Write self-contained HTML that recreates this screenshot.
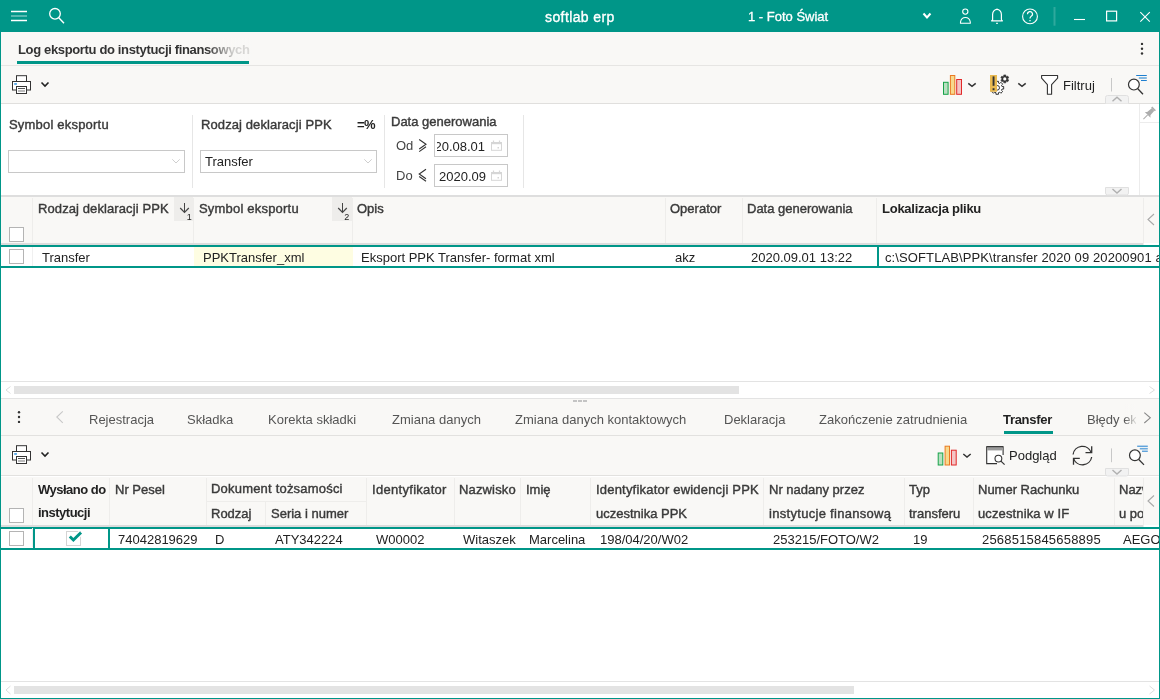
<!DOCTYPE html>
<html><head><meta charset="utf-8">
<style>
*{box-sizing:border-box}
html,body{margin:0;padding:0}
body{width:1160px;height:699px;overflow:hidden;position:relative;background:#fff;font-family:"Liberation Sans",sans-serif;font-size:13px;color:#333}
.a{position:absolute}
.t{position:absolute;white-space:nowrap;line-height:15px;font-size:13px;will-change:transform}
.b{font-weight:bold}
.m{-webkit-text-stroke:0.4px currentColor}
.hl{position:absolute;height:1px;background:#e2e2e2}
.vl{position:absolute;width:1px;background:#e6e6e6}
svg{position:absolute;left:0;top:0;overflow:visible}
</style></head><body>
<!-- top bar -->
<div class="a" style="left:0;top:0;width:1160px;height:32px;background:#009688"></div>
<div class="t" style="left:545px;top:10px;color:#fff;font-size:14px;letter-spacing:0.4px;-webkit-text-stroke:0.35px #fff">softlab erp</div>
<div class="t" style="left:748px;top:9px;color:#fff;-webkit-text-stroke:0.3px #fff">1 - Foto Świat</div>

<!-- window border -->
<div class="a" style="left:0;top:32px;width:1px;height:667px;background:#009688;z-index:5"></div>
<div class="a" style="left:1159px;top:32px;width:1px;height:667px;background:#009688;z-index:5"></div>
<div class="a" style="left:0;top:698px;width:1160px;height:1px;background:#009688;z-index:5"></div>

<!-- page tab strip -->
<div class="a" style="left:1px;top:32px;width:1158px;height:71px;background:#f9f8f6"></div>
<div class="t b" style="left:18px;top:42px;color:#333;letter-spacing:-0.35px;width:233px;overflow:hidden">Log eksportu do instytucji finansowych</div>
<div class="a" style="left:206px;top:38px;width:46px;height:22px;background:linear-gradient(to right,rgba(249,248,246,0),rgba(249,248,246,.8) 60%,rgba(249,248,246,.85))"></div>
<div class="a" style="left:17px;top:61px;width:232px;height:3px;background:#009688"></div>
<div class="hl" style="left:1px;top:65px;width:1158px;background:#e6e5e3"></div>
<div class="hl" style="left:1px;top:103px;width:1158px;background:#e0dfdd"></div>

<div class="t" style="left:1063px;top:78px;color:#222">Filtruj</div>

<!-- filter panel -->
<div class="t m" style="left:9px;top:117px;color:#3a3a3a;letter-spacing:0.2px">Symbol eksportu</div>
<div class="a" style="left:8px;top:150px;width:177px;height:23px;border:1px solid #c8c8c8;background:#fff"></div>
<div class="vl" style="left:192px;top:115px;height:73px"></div>
<div class="t m" style="left:201px;top:117px;color:#3a3a3a;letter-spacing:0.1px">Rodzaj deklaracji PPK</div>
<div class="t b" style="left:357px;top:117px;letter-spacing:-0.5px;color:#222">=%</div>
<div class="a" style="left:200px;top:150px;width:177px;height:23px;border:1px solid #c8c8c8;background:#fff"></div>
<div class="t" style="left:205px;top:154px;color:#222">Transfer</div>
<div class="vl" style="left:384px;top:115px;height:73px"></div>
<div class="t m" style="left:391px;top:114px;color:#3a3a3a">Data generowania</div>
<div class="t" style="left:396px;top:138px;color:#444">Od</div>
<div class="t" style="left:396px;top:168px;color:#444">Do</div>
<div class="a" style="left:434px;top:134px;width:74px;height:23px;border:1px solid #c8c8c8;background:#fff;overflow:hidden"><div class="a" style="left:2px;top:0;width:52px;height:21px;overflow:hidden"><div class="t" style="left:-17px;top:4px;color:#222">2020.08.01</div></div></div>
<div class="a" style="left:434px;top:164px;width:74px;height:23px;border:1px solid #c8c8c8;background:#fff;overflow:hidden"><div class="t" style="left:4px;top:4px;color:#222">2020.09</div></div>
<div class="vl" style="left:523px;top:115px;height:73px"></div>
<div class="vl" style="left:1139px;top:104px;height:91px;background:#ececec"></div>
<div class="hl" style="left:1139px;top:122px;width:20px;background:#ececec"></div>

<div class="a" style="left:1px;top:195px;width:1158px;height:2px;background:#dedede"></div>

<!-- grid 1 header -->
<div class="a" style="left:1px;top:197px;width:1158px;height:46px;background:#f9f8f6"></div>
<div class="a" style="left:1px;top:243px;width:1142px;height:2px;background:#dcdcdc"></div>


<!-- grid 1 columns -->
<div class="vl" style="left:32px;top:198px;height:45px;background:#eeedeb"></div>
<div class="vl" style="left:193px;top:198px;height:45px;background:#eeedeb"></div>
<div class="vl" style="left:352px;top:198px;height:45px;background:#eeedeb"></div>
<div class="vl" style="left:665px;top:198px;height:45px;background:#eeedeb"></div>
<div class="vl" style="left:742px;top:198px;height:45px;background:#eeedeb"></div>
<div class="vl" style="left:876px;top:198px;height:45px;background:#eeedeb"></div>
<div class="vl" style="left:1143px;top:198px;height:47px;background:#eeedeb"></div>
<div class="a" style="left:174px;top:197px;width:19px;height:24px;background:#eeedeb"></div>
<div class="a" style="left:332px;top:197px;width:20px;height:24px;background:#eeedeb"></div>
<div class="a" style="left:9px;top:227px;width:15px;height:15px;border:1px solid #b4b4b4;background:#fff"></div>
<div class="t m" style="left:38px;top:201px;color:#3a3a3a;letter-spacing:0.1px">Rodzaj deklaracji PPK</div>
<div class="t m" style="left:199px;top:201px;color:#3a3a3a;letter-spacing:0.2px">Symbol eksportu</div>
<div class="t m" style="left:357px;top:201px;color:#3a3a3a">Opis</div>
<div class="t m" style="left:670px;top:201px;color:#3a3a3a">Operator</div>
<div class="t m" style="left:747px;top:201px;color:#3a3a3a">Data generowania</div>
<div class="t b" style="left:882px;top:201px;color:#222;letter-spacing:-0.25px">Lokalizacja pliku</div>

<!-- grid 1 row -->
<div class="a" style="left:1px;top:245px;width:1158px;height:2px;background:#009688"></div>
<div class="a" style="left:1px;top:266px;width:1158px;height:2px;background:#009688"></div>
<div class="a" style="left:194px;top:247px;width:159px;height:19px;background:#fefde2"></div>
<div class="vl" style="left:32px;top:247px;height:19px;background:#f0f0f0"></div>
<div class="a" style="left:9px;top:249px;width:15px;height:15px;border:1px solid #b4b4b4;background:#fff"></div>
<div class="a" style="left:877px;top:245px;width:2px;height:23px;background:#009688"></div>
<div class="t" style="left:42px;top:250px;color:#222">Transfer</div>
<div class="t" style="left:203px;top:250px;color:#222">PPKTransfer_xml</div>
<div class="t" style="left:361px;top:250px;color:#222">Eksport PPK Transfer- format xml</div>
<div class="t" style="left:675px;top:250px;color:#222">akz</div>
<div class="t" style="left:751px;top:250px;color:#222">2020.09.01 13:22</div>
<div class="a" style="left:879px;top:247px;width:280px;height:19px;overflow:hidden"><div class="t" style="left:6px;top:3px;color:#222;letter-spacing:0.11px">c:\SOFTLAB\PPK\transfer 2020 09 20200901 akz.xml</div></div>

<!-- scrollbar 1 -->
<div class="hl" style="left:1px;top:381px;width:1158px;background:#e3e3e3"></div>
<div class="a" style="left:14px;top:386px;width:725px;height:8px;background:#e3e3e3"></div>
<div class="hl" style="left:1px;top:398px;width:1158px;background:#e3e3e3"></div>

<!-- tabs strip 2 -->
<div class="a" style="left:1px;top:399px;width:1158px;height:76px;background:#f9f8f6"></div>
<div class="a" style="left:573px;top:400px;width:4px;height:2px;background:#c4c4c4"></div>
<div class="a" style="left:578px;top:400px;width:4px;height:2px;background:#c4c4c4"></div>
<div class="a" style="left:583px;top:400px;width:4px;height:2px;background:#c4c4c4"></div>
<div class="t" style="left:89px;top:412px;color:#555">Rejestracja</div>
<div class="t" style="left:187px;top:412px;color:#555">Składka</div>
<div class="t" style="left:268px;top:412px;color:#555">Korekta składki</div>
<div class="t" style="left:392px;top:412px;color:#555">Zmiana danych</div>
<div class="t" style="left:515px;top:412px;color:#555">Zmiana danych kontaktowych</div>
<div class="t" style="left:724px;top:412px;color:#555">Deklaracja</div>
<div class="t" style="left:819px;top:412px;color:#555">Zakończenie zatrudnienia</div>
<div class="t b" style="left:1003px;top:412px;color:#222;letter-spacing:-0.3px">Transfer</div>
<div class="a" style="left:1004px;top:431px;width:49px;height:3px;background:#009688"></div>
<div class="a" style="left:1087px;top:404px;width:49px;height:28px;overflow:hidden"><div class="t" style="left:0;top:8px;color:#555">Błędy eksportu</div></div>
<div class="a" style="left:1124px;top:404px;width:12px;height:28px;background:linear-gradient(to right,rgba(249,248,246,0),rgba(249,248,246,.85))"></div>
<div class="hl" style="left:1px;top:435px;width:1158px;background:#e2e1df"></div>
<div class="t" style="left:1009px;top:448px;color:#222">Podgląd</div>
<div class="hl" style="left:1px;top:475px;width:1158px;background:#e2e1df"></div>

<!-- grid 2 header -->
<div class="a" style="left:1px;top:477px;width:1158px;height:48px;background:#f9f8f6"></div>
<div class="a" style="left:1px;top:525px;width:1142px;height:2px;background:#dcdcdc"></div>
<div class="vl" style="left:32px;top:478px;height:47px;background:#eeedeb"></div>
<div class="vl" style="left:109px;top:478px;height:47px;background:#eeedeb"></div>
<div class="vl" style="left:206px;top:478px;height:47px;background:#eeedeb"></div>
<div class="hl" style="left:206px;top:501px;width:160px;background:#eeedeb"></div>
<div class="vl" style="left:265px;top:501px;height:24px;background:#eeedeb"></div>
<div class="vl" style="left:366px;top:478px;height:47px;background:#eeedeb"></div>
<div class="vl" style="left:454px;top:478px;height:47px;background:#eeedeb"></div>
<div class="vl" style="left:520px;top:478px;height:47px;background:#eeedeb"></div>
<div class="vl" style="left:590px;top:478px;height:47px;background:#eeedeb"></div>
<div class="vl" style="left:763px;top:478px;height:47px;background:#eeedeb"></div>
<div class="vl" style="left:904px;top:478px;height:47px;background:#eeedeb"></div>
<div class="vl" style="left:973px;top:478px;height:47px;background:#eeedeb"></div>
<div class="vl" style="left:1114px;top:478px;height:47px;background:#eeedeb"></div>
<div class="vl" style="left:1143px;top:478px;height:49px;background:#eeedeb"></div>
<div class="a" style="left:9px;top:508px;width:15px;height:15px;border:1px solid #b4b4b4;background:#fff"></div>
<div class="t b" style="left:38px;top:482px;color:#222;letter-spacing:-0.5px">Wysłano do</div>
<div class="t b" style="left:38px;top:505px;color:#222;letter-spacing:-0.5px">instytucji</div>
<div class="t m" style="left:115px;top:482px;color:#3a3a3a">Nr Pesel</div>
<div class="t m" style="left:211px;top:481px;color:#3a3a3a;letter-spacing:0.2px">Dokument tożsamości</div>
<div class="t m" style="left:211px;top:506px;color:#3a3a3a">Rodzaj</div>
<div class="t m" style="left:271px;top:506px;color:#3a3a3a">Seria i numer</div>
<div class="t m" style="left:372px;top:482px;color:#3a3a3a;letter-spacing:0.3px">Identyfikator</div>
<div class="t m" style="left:459px;top:482px;color:#3a3a3a;letter-spacing:0.15px">Nazwisko</div>
<div class="t m" style="left:526px;top:482px;color:#3a3a3a">Imię</div>
<div class="t m" style="left:596px;top:482px;color:#3a3a3a;letter-spacing:0.2px">Identyfikator ewidencji PPK</div>
<div class="t m" style="left:596px;top:506px;color:#3a3a3a">uczestnika PPK</div>
<div class="t m" style="left:769px;top:482px;color:#3a3a3a">Nr nadany przez</div>
<div class="t m" style="left:769px;top:506px;color:#3a3a3a;letter-spacing:0.3px">instytucje finansową</div>
<div class="t m" style="left:909px;top:482px;color:#3a3a3a">Typ</div>
<div class="t m" style="left:909px;top:506px;color:#3a3a3a">transferu</div>
<div class="t m" style="left:978px;top:482px;color:#3a3a3a">Numer Rachunku</div>
<div class="t m" style="left:978px;top:506px;color:#3a3a3a;letter-spacing:0.12px">uczestnika w IF</div>
<div class="a" style="left:1115px;top:476px;width:28px;height:49px;overflow:hidden"><div class="t m" style="left:4px;top:6px;color:#3a3a3a">Nazwa</div><div class="t m" style="left:4px;top:30px;color:#3a3a3a">u podmiotu</div></div>

<!-- grid 2 row -->
<div class="a" style="left:1px;top:527px;width:1158px;height:2px;background:#009688"></div>
<div class="a" style="left:1px;top:548px;width:1158px;height:2px;background:#009688"></div>
<div class="vl" style="left:32px;top:528px;height:19px;background:#f0f0f0"></div>
<div class="a" style="left:9px;top:531px;width:15px;height:15px;border:1px solid #b4b4b4;background:#fff"></div>
<div class="a" style="left:33px;top:527px;width:77px;height:23px;border:2px solid #009688"></div>
<div class="t" style="left:118px;top:532px;color:#222">74042819629</div>
<div class="t" style="left:215px;top:532px;color:#222">D</div>
<div class="t" style="left:275px;top:532px;color:#222">ATY342224</div>
<div class="t" style="left:376px;top:532px;color:#222">W00002</div>
<div class="t" style="left:463px;top:532px;color:#222">Witaszek</div>
<div class="t" style="left:529px;top:532px;color:#222">Marcelina</div>
<div class="t" style="left:600px;top:532px;color:#222">198/04/20/W02</div>
<div class="t" style="left:773px;top:532px;color:#222">253215/FOTO/W2</div>
<div class="t" style="left:913px;top:532px;color:#222">19</div>
<div class="t" style="left:982px;top:532px;color:#222;letter-spacing:0.2px">2568515845658895</div>
<div class="a" style="left:1115px;top:528px;width:44px;height:19px;overflow:hidden"><div class="t" style="left:8px;top:4px;color:#222">AEGON</div></div>

<!-- scrollbar 2 -->
<div class="hl" style="left:1px;top:681px;width:1158px;background:#e3e3e3"></div>
<div class="a" style="left:14px;top:686px;width:840px;height:8px;background:#e3e3e3"></div>

<svg width="1160" height="699" viewBox="0 0 1160 699" style="z-index:10">
<!-- top bar icons -->
<g stroke="#fff" fill="none">
 <line x1="11" y1="11.5" x2="27" y2="11.5" stroke-width="1.5"/>
 <line x1="11" y1="16" x2="27" y2="16" stroke-width="1.5" stroke-opacity="0.45"/>
 <line x1="11" y1="20.5" x2="27" y2="20.5" stroke-width="1.5"/>
 <circle cx="55" cy="13.8" r="5.3" stroke-width="1.3"/>
 <line x1="58.8" y1="17.8" x2="64" y2="23.2" stroke-width="1.4"/>
 <polyline points="923.5,13.5 927,17.5 930.5,13.5" stroke-width="2"/>
 <circle cx="965.3" cy="11.6" r="2.6" stroke-width="1.1"/>
 <path d="M960.5,23.3 L960.5,22 A5,5.6 0 0 1 970.3,22 L970.3,23.3 Z" stroke-width="1.1"/>
 <path d="M992.6,20.8 L992.6,14.5 A4.4,5.2 0 0 1 1001.4,14.5 L1001.4,19.5 Q1001.6,20.6 1002.8,20.8 L991.2,20.8 Q992.4,20.6 992.6,19.5 M996.2,23.3 L997.8,23.3 M997,8.5 L997,9.5" stroke-width="1.2"/>
 <circle cx="1030" cy="16.4" r="7.4" stroke-width="1.1"/>
 <path d="M1027.5,14.2 A2.5,2.5 0 1 1 1031.2,16.3 C1030.2,16.9 1030,17.5 1030,18.6" stroke-width="1.2"/>
 <line x1="1030" y1="19.9" x2="1030" y2="21.2" stroke-width="1.3"/>
 <line x1="1054.5" y1="7" x2="1054.5" y2="25.7" stroke-width="2" stroke-opacity="0.18"/>
 <line x1="1074" y1="19.5" x2="1085" y2="19.5" stroke-width="1.1"/>
 <rect x="1106.6" y="11.2" width="10" height="9.7" stroke-width="1.2"/>
 <path d="M1140.3,12.2 L1149.8,21.7 M1149.8,12.2 L1140.3,21.7" stroke-width="1.1"/>
</g>
<!-- printer 1 -->
<g id="prn">
 <rect x="16.5" y="75.7" width="10" height="5.8" fill="#fff" stroke="#333" stroke-width="1"/>
 <rect x="12.5" y="81.5" width="18" height="8.5" fill="#fff" stroke="#333" stroke-width="1"/>
 <rect x="14.2" y="83" width="2.7" height="1.9" fill="#5aa9e6"/>
 <rect x="16.5" y="86.5" width="10" height="7" fill="#fff" stroke="#333" stroke-width="1"/>
 <line x1="18" y1="88.5" x2="25" y2="88.5" stroke="#444" stroke-width="0.9"/>
 <line x1="18" y1="91" x2="25" y2="91" stroke="#aaa" stroke-width="1.6"/>
 <polyline points="41.5,82.5 45,86 48.5,82.5" fill="none" stroke="#222" stroke-width="1.6"/>
</g>
<use href="#prn" x="0" y="370"/>
<!-- bar chart 1 -->
<g id="bars">
 <rect x="943.5" y="82.3" width="4.6" height="12" fill="#b9e0c1" stroke="#17a349" stroke-width="1"/>
 <rect x="950.4" y="75.5" width="4.4" height="18.8" fill="#f7d98c" stroke="#ea7a22" stroke-width="1"/>
 <rect x="956.7" y="79.5" width="4.8" height="14.8" fill="#f4c5c5" stroke="#e22828" stroke-width="1"/>
</g>
<polyline points="968.3,83.3 972,86.3 975.7,83.3" fill="none" stroke="#333" stroke-width="1.5"/>
<use href="#bars" x="-5.3" y="370.7"/>
<polyline points="963.3,454 967,457 970.7,454" fill="none" stroke="#333" stroke-width="1.5"/>
<!-- gear/excl -->
<g>
 <path d="M995.99,82.95 L995.91,81.33 L998.49,81.33 L998.41,82.95 L999.77,83.51 L1000.87,82.31 L1002.69,84.13 L1001.49,85.23 L1002.05,86.59 L1003.67,86.51 L1003.67,89.09 L1002.05,89.01 L1001.49,90.37 L1002.69,91.47 L1000.87,93.29 L999.77,92.09 L998.41,92.65 L998.49,94.27 L995.91,94.27 L995.99,92.65 L994.63,92.09 L993.53,93.29 L991.71,91.47 L992.91,90.37 L992.35,89.01 L990.73,89.09 L990.73,86.51 L992.35,86.59 L992.91,85.23 L991.71,84.13 L993.53,82.31 L994.63,83.51 Z" fill="#fff" stroke="#333" stroke-width="1" stroke-linejoin="round"/>
 <circle cx="997.2" cy="87.8" r="2.3" fill="#fff" stroke="#333" stroke-width="1"/>
 <rect x="990" y="75" width="7" height="16.8" fill="#e8b951"/>
 <rect x="992.6" y="76.4" width="1.9" height="9.4" fill="#333"/>
 <rect x="992.6" y="88.2" width="1.9" height="2" fill="#333"/>
 <path d="M1003.84,76.06 L1003.74,74.94 L1005.86,74.94 L1005.76,76.06 L1006.78,76.64 L1007.70,76.00 L1008.76,77.84 L1007.74,78.31 L1007.74,79.49 L1008.76,79.96 L1007.70,81.80 L1006.78,81.16 L1005.76,81.74 L1005.86,82.86 L1003.74,82.86 L1003.84,81.74 L1002.82,81.16 L1001.90,81.80 L1000.84,79.96 L1001.86,79.49 L1001.86,78.31 L1000.84,77.84 L1001.90,76.00 L1002.82,76.64 Z" fill="#333" stroke="#333" stroke-width="0.6" stroke-linejoin="round"/>
 <circle cx="1004.8" cy="78.9" r="1.6" fill="#fff"/>
</g>
<polyline points="1018.3,83.3 1022,86.3 1025.7,83.3" fill="none" stroke="#333" stroke-width="1.5"/>
<!-- funnel -->
<path d="M1041.6,75.5 L1057.6,75.5 L1057.6,78.2 L1051.6,84.6 L1051.6,94.2 L1047.4,94.2 L1047.4,84.6 L1041.6,78.2 Z" fill="#fff" stroke="#333" stroke-width="1.1" stroke-linejoin="round"/>
<!-- separators -->
<line x1="1111.5" y1="78" x2="1111.5" y2="91.5" stroke="#c8c8c8" stroke-width="1"/>
<line x1="1111.5" y1="448.4" x2="1111.5" y2="462.2" stroke="#c8c8c8" stroke-width="1"/>
<!-- search w/ lines -->
<g id="srch">
 <circle cx="1133.9" cy="84.6" r="5.4" fill="#fff" stroke="#333" stroke-width="1.2"/>
 <line x1="1137.8" y1="88.8" x2="1143" y2="94.2" stroke="#333" stroke-width="1.3"/>
 <line x1="1136.2" y1="75.5" x2="1146.8" y2="75.5" stroke="#1e7fd0" stroke-width="1"/>
 <line x1="1138.8" y1="78" x2="1146.8" y2="78" stroke="#6aaade" stroke-width="1.6"/>
 <line x1="1141" y1="80.5" x2="1146.8" y2="80.5" stroke="#1e7fd0" stroke-width="1"/>
</g>
<use href="#srch" x="1" y="370.7"/>
<!-- collapse tabs -->
<path d="M1105.5,103.5 L1105.5,97.5 Q1105.5,95.5 1107.5,95.5 L1126.5,95.5 Q1128.5,95.5 1128.5,97.5 L1128.5,103.5" fill="#f2f2f2" stroke="#e0e0e0" stroke-width="1"/>
<polyline points="1112.5,101.3 1117,97.3 1121.5,101.3" fill="none" stroke="#b0b0b0" stroke-width="1.4"/>
<path d="M1105.5,187.5 L1105.5,193 Q1105.5,195 1107.5,195 L1126.5,195 Q1128.5,195 1128.5,193 L1128.5,187.5 Z" fill="#f2f2f2" stroke="#e0e0e0" stroke-width="1"/>
<polyline points="1112.5,189 1117,193 1121.5,189" fill="none" stroke="#b0b0b0" stroke-width="1.4"/>
<path d="M1105.5,468.5 L1105.5,474 Q1105.5,476 1107.5,476 L1126.5,476 Q1128.5,476 1128.5,474 L1128.5,468.5 Z" fill="#f2f2f2" stroke="#e0e0e0" stroke-width="1"/>
<polyline points="1112.5,470 1117,474 1121.5,470" fill="none" stroke="#b0b0b0" stroke-width="1.4"/>
<!-- pin -->
<g transform="translate(1149.5,113) rotate(45)" fill="#adadad">
 <rect x="-2.6" y="-6.5" width="5.2" height="1.6"/>
 <path d="M-1.8,-5 L1.8,-5 L2.3,1 L4,2.6 L-4,2.6 L-2.3,1 Z"/>
 <rect x="-0.45" y="2.6" width="0.9" height="6"/>
</g>
<!-- combo chevrons -->
<polyline points="172.3,159.3 176,163 179.7,159.3" fill="none" stroke="#cfcfcf" stroke-width="1"/>
<polyline points="364.3,159.3 368,163 371.7,159.3" fill="none" stroke="#cfcfcf" stroke-width="1"/>
<!-- >= <= -->
<g fill="none" stroke="#333" stroke-width="1.1">
 <polyline points="419.2,139.5 426,144.3 419.2,149"/>
 <line x1="419.2" y1="151.6" x2="426" y2="146.8"/>
 <polyline points="426,169.2 419.2,174 426,178.8"/>
 <line x1="419.2" y1="176.5" x2="426" y2="181.3"/>
</g>
<!-- calendars -->
<g id="cal" fill="none" stroke="#d6d6d6">
 <rect x="491.5" y="142.5" width="10" height="7.8" stroke-width="1"/>
 <rect x="491.5" y="142" width="10" height="2.2" fill="#d6d6d6" stroke="none"/>
 <line x1="493.5" y1="140.5" x2="493.5" y2="142.5" stroke-width="1.2"/>
 <line x1="499.5" y1="140.5" x2="499.5" y2="142.5" stroke-width="1.2"/>
 <rect x="497.5" y="147" width="1.5" height="1.5" fill="#d6d6d6" stroke="none"/>
</g>
<use href="#cal" x="0" y="30"/>
<!-- sort arrows -->
<g id="sort" fill="none" stroke="#444">
 <line x1="184.5" y1="203" x2="184.5" y2="212" stroke-width="1"/>
 <polyline points="180.2,208 184.5,212.3 188.8,208" stroke-width="1.2"/>
</g>
<use href="#sort" x="158" y="0"/>
<text x="186.8" y="219.8" font-family="Liberation Sans" font-size="9" fill="#222">1</text>
<text x="344.3" y="219.8" font-family="Liberation Sans" font-size="9" fill="#222">2</text>
<!-- right side arrows -->
<polyline points="1154,214 1148,219.5 1154,225" fill="none" stroke="#a8a8a8" stroke-width="1.1"/>
<polyline points="1154,495.5 1148,501 1154,506.5" fill="none" stroke="#a8a8a8" stroke-width="1.1"/>
<polyline points="10.5,386.5 6,390 10.5,393.5" fill="none" stroke="#dcdcdc" stroke-width="1"/>
<polyline points="1149.5,386.5 1154.5,390 1149.5,393.5" fill="none" stroke="#dcdcdc" stroke-width="1"/>
<polyline points="10.5,686 6,690 10.5,694" fill="none" stroke="#dcdcdc" stroke-width="1"/>
<polyline points="1149.5,686 1154.5,690 1149.5,694" fill="none" stroke="#dcdcdc" stroke-width="1"/>
<!-- tabs2 kebab & arrows -->
<circle cx="1142" cy="43.9" r="1.2" fill="#333"/><circle cx="1142" cy="48.7" r="1.2" fill="#333"/><circle cx="1142" cy="53.5" r="1.2" fill="#333"/>
<circle cx="19" cy="412.2" r="1.2" fill="#333"/><circle cx="19" cy="417" r="1.2" fill="#333"/><circle cx="19" cy="421.9" r="1.2" fill="#333"/>
<polyline points="62.8,411.3 56.8,417 62.8,422.8" fill="none" stroke="#c8c8c8" stroke-width="1.1"/>
<polyline points="1144.3,412.6 1150.3,417.8 1144.3,423" fill="none" stroke="#888" stroke-width="1.1"/>
<!-- podglad -->
<g fill="none" stroke="#333">
 <path d="M997,463.6 L986.7,463.6 L986.7,446.7 L1003.1,446.7 L1003.1,455" fill="#fff" stroke-width="1.1"/>
 <rect x="987.2" y="447.2" width="15.4" height="3.2" fill="#9a9a9a" stroke="none"/>
 <line x1="986.7" y1="446.7" x2="1003.1" y2="446.7" stroke-width="1.1"/>
 <circle cx="998.4" cy="458.6" r="3.4" stroke-width="1.1" fill="#fff"/>
 <line x1="1000.9" y1="461.1" x2="1004.6" y2="464.6" stroke-width="1.2"/>
</g>
<!-- refresh -->
<g fill="none" stroke="#333" stroke-width="1.3">
 <path d="M1073.1,454.5 A9.4,9.4 0 0 1 1091.2,452.4"/>
 <polyline points="1091.7,446.2 1091.7,452.6 1085.5,452.6"/>
 <path d="M1091.7,457 A9.4,9.4 0 0 1 1073.6,458.6"/>
 <polyline points="1079.8,458.4 1073.5,458.4 1073.5,464.8"/>
</g>
<!-- checkmark -->
<rect x="66.5" y="531.5" width="14" height="14" fill="#fff" stroke="#d4d4d4" stroke-width="1"/>
<polyline points="69.8,536.5 73.4,540 81,532.5" fill="none" stroke="#fff" stroke-width="5.5"/>
<polyline points="69.8,536.5 73.4,540 81,532.5" fill="none" stroke="#009688" stroke-width="3"/>
<!-- splitter dashes -->
</svg>
</body></html>
